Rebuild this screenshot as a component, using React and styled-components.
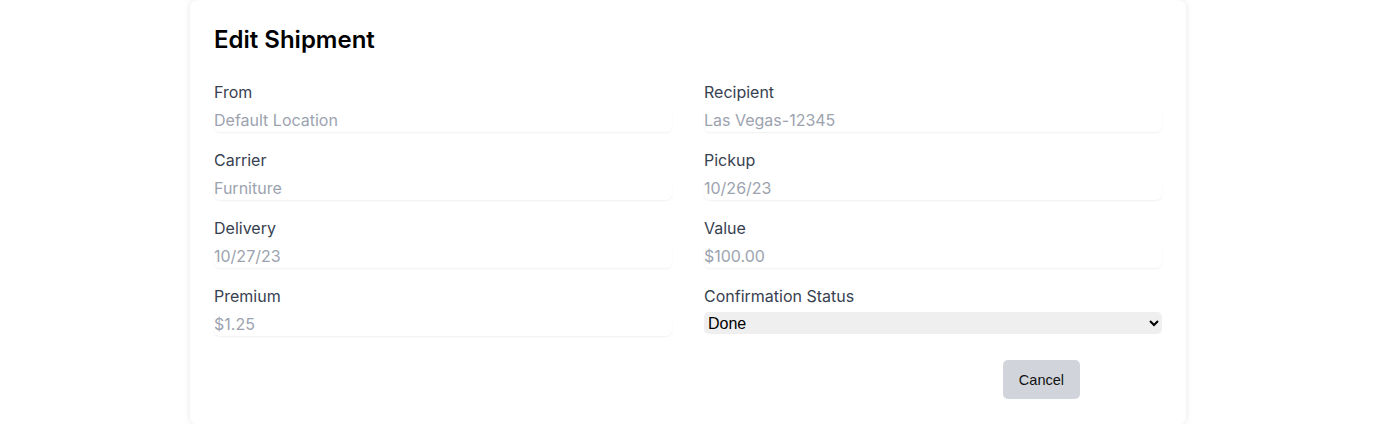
import React from "react"
import styled, { createGlobalStyle } from "styled-components"

const GlobalStyle = createGlobalStyle`
    body {
        margin: 0;
        background: #ffffff;
        font-family: Inter, "Noto Sans", sans-serif;
    }
`

const Card = styled.div`
    width: 996px;
    box-sizing: border-box;
    margin: 0 auto;
    padding: 24px 24px 26px;
    background: #ffffff;
    border-radius: 8px;
    box-shadow: 0 0 6px rgba(0, 0, 0, 0.1);
`

const Title = styled.h2`
    margin: 0 0 24px;
    font-size: 24px;
    line-height: 32px;
    font-weight: 600;
    color: #000000;
`

const FieldsGrid = styled.div`
    display: grid;
    grid-template-columns: 1fr 1fr;
    column-gap: 32px;
    row-gap: 16px;
`

const Field = styled.div`
    display: flex;
    flex-direction: column;
    gap: 4px;
`

const Label = styled.label`
    font-size: 16px;
    line-height: 24px;
    color: #374151;
`

const TextInput = styled.input`
    height: 24px;
    padding: 0;
    border: none;
    border-radius: 6px;
    outline: none;
    font-family: Inter, "Noto Sans", sans-serif;
    font-size: 16px;
    line-height: 24px;
    color: #9ca3af;
    background: #ffffff;
    box-shadow: 0 1px 2px rgba(0, 0, 0, 0.06);
`

const Select = styled.select`
    height: 22px;
    border: none;
    border-radius: 5px;
    background: #efefef;
    font-family: "Liberation Sans", Arial, sans-serif;
    font-size: 16px;
    color: #000000;
    outline: none;
`

const Actions = styled.div`
    display: flex;
    justify-content: flex-end;
    margin-top: 24px;
    padding-right: 82px;
`

const Button = styled.button`
    height: 39px;
    padding: 0 16px;
    border: none;
    border-radius: 5px;
    background: ${props => (props.$muted ? "#d1d5db" : "#2563eb")};
    color: ${props => (props.$muted ? "#111111" : "#ffffff")};
    font-family: "Liberation Sans", Arial, sans-serif;
    font-size: 14.5px;
    cursor: pointer;
`

const fields = [
    { label: "From", value: "Default Location" },
    { label: "Recipient", value: "Las Vegas-12345" },
    { label: "Carrier", value: "Furniture" },
    { label: "Pickup", value: "10/26/23" },
    { label: "Delivery", value: "10/27/23" },
    { label: "Value", value: "$100.00" },
    { label: "Premium", value: "$1.25" },
]

const App = () => {
    return (
        <>
            <GlobalStyle />
            <Card>
                <Title>Edit Shipment</Title>
                <FieldsGrid>
                    {fields.map(f => (
                        <Field key={f.label}>
                            <Label>{f.label}</Label>
                            <TextInput readOnly value={f.value} />
                        </Field>
                    ))}
                    <Field>
                        <Label>Confirmation Status</Label>
                        <Select defaultValue="Done">
                            <option>Done</option>
                            <option>Pending</option>
                        </Select>
                    </Field>
                </FieldsGrid>
                <Actions>
                    <Button $muted>Cancel</Button>
                </Actions>
            </Card>
        </>
    )
}

export default App
